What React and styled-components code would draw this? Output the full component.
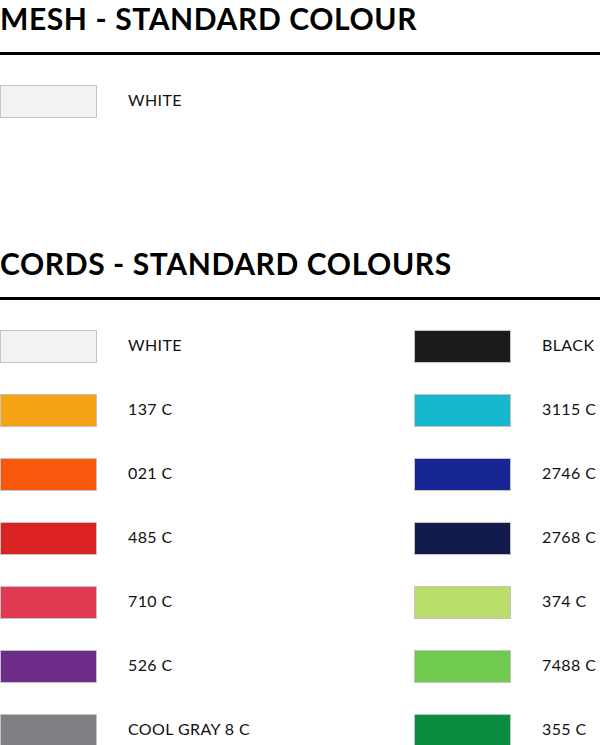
import styled, { createGlobalStyle } from 'styled-components'

const Global = createGlobalStyle`
  body {
    margin: 0;
    background: #fff;
    font-family: "Lato", "Liberation Sans", sans-serif;
    color: #111;
  }
`

const Page = styled.div`
  width: 600px;
  height: 745px;
  overflow: hidden;
`

const Section = styled.section`
  margin-bottom: ${p => p.$space || 0}px;
`

const Title = styled.h2`
  margin: 0;
  font-size: 30px;
  line-height: 36px;
  font-weight: 700;
  letter-spacing: 0.6px;
  padding: 0 0 16px;
  border-bottom: 3px solid #000;
  color: #000;
`

const Grid = styled.div`
  display: grid;
  grid-template-columns: 414px 1fr;
  row-gap: 31px;
  padding-top: 30px;
`

const Row = styled.div`
  display: flex;
  align-items: center;
`

const Swatch = styled.div`
  width: 97px;
  height: 33px;
  box-sizing: border-box;
  border: 1px solid #c4c4c4;
  background: ${p => p.$color};
`

const Label = styled.span`
  margin-left: 31px;
  margin-bottom: 4px;
  font-size: 16px;
  letter-spacing: 0.4px;
  color: #111;
`

const mesh = [{ name: 'WHITE', color: '#f2f2f2' }]

const cords = [
  { name: 'WHITE', color: '#f2f2f2' },
  { name: 'BLACK', color: '#1c1c1c' },
  { name: '137 C', color: '#f5a214' },
  { name: '3115 C', color: '#17b8cf' },
  { name: '021 C', color: '#f7580c' },
  { name: '2746 C', color: '#182594' },
  { name: '485 C', color: '#da2223' },
  { name: '2768 C', color: '#111c4c' },
  { name: '710 C', color: '#e03a52' },
  { name: '374 C', color: '#b9de6c' },
  { name: '526 C', color: '#6c2c88' },
  { name: '7488 C', color: '#6fca4d' },
  { name: 'COOL GRAY 8 C', color: '#7f7f84' },
  { name: '355 C', color: '#0a8c3f' },
]

export default function App() {
  return (
    <>
      <Global />
      <Page>
        <Section $space={127}>
          <Title>MESH - STANDARD COLOUR</Title>
          <Grid>
            {mesh.map(c => (
              <Row key={c.name}>
                <Swatch $color={c.color} />
                <Label>{c.name}</Label>
              </Row>
            ))}
          </Grid>
        </Section>
        <Section>
          <Title>CORDS - STANDARD COLOURS</Title>
          <Grid>
            {cords.map(c => (
              <Row key={c.name}>
                <Swatch $color={c.color} />
                <Label>{c.name}</Label>
              </Row>
            ))}
          </Grid>
        </Section>
      </Page>
    </>
  )
}
